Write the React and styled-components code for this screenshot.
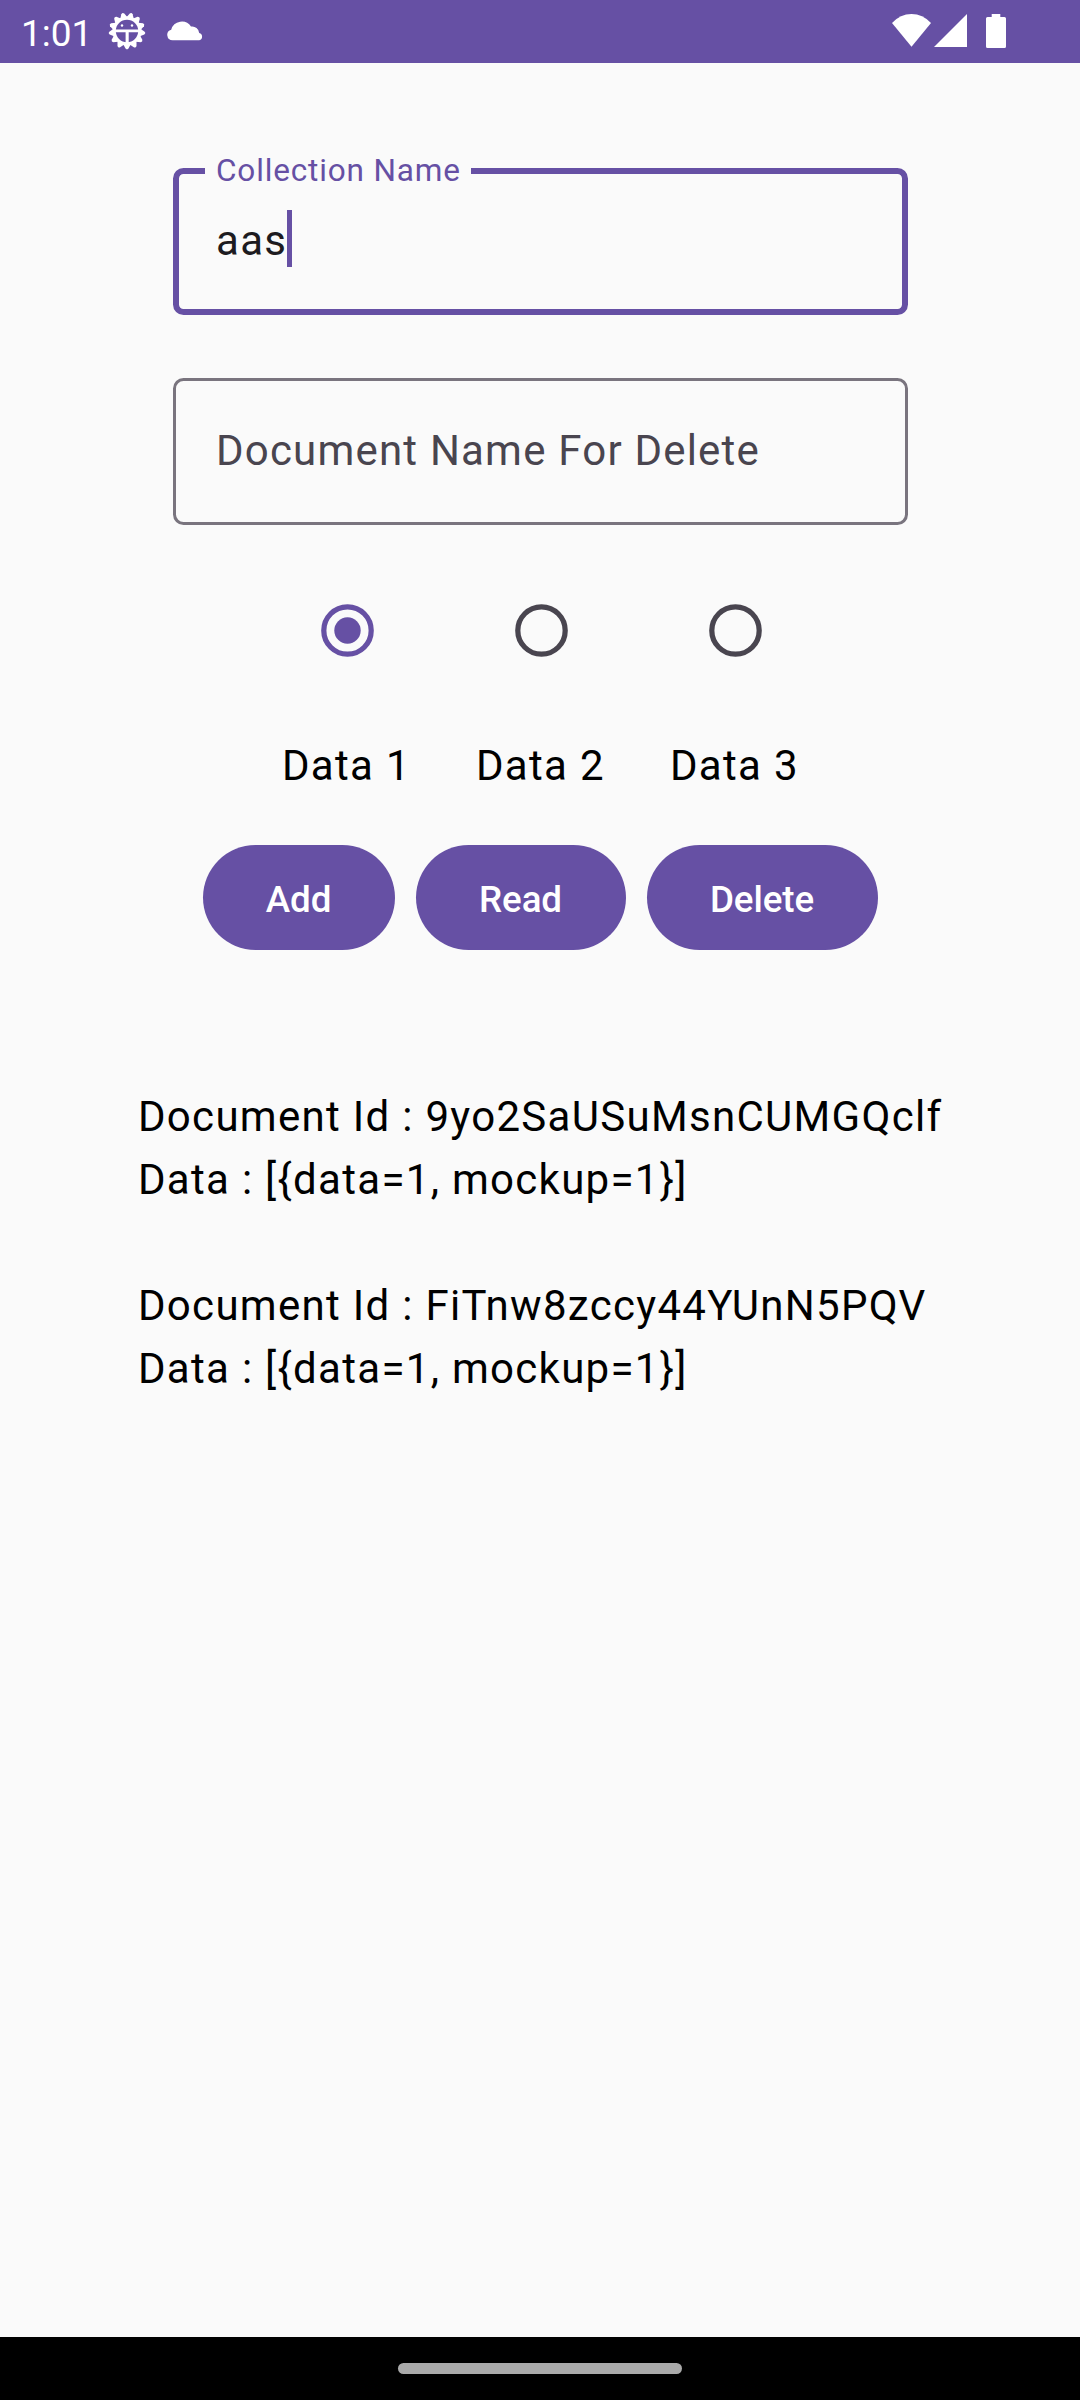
import React, { useState } from "react";
import styled, { createGlobalStyle, css } from "styled-components";

const purple = "#6650a4";
const surface = "#fafafa";
const onSurfaceVariant = "#49454f";

const GlobalStyle = createGlobalStyle`
  *, *::before, *::after { box-sizing: border-box; }
  body { margin: 0; background: ${surface}; }
`;

const bodyLarge = css`
  font-size: 42px;
  line-height: 63px;
  letter-spacing: 1.3px;
  font-weight: 400;
`;

const Screen = styled.div`
  display: flex;
  flex-direction: column;
  width: 1080px;
  height: 2400px;
  overflow: hidden;
  background: ${surface};
  color: #000;
  font-family: Roboto, "Noto Sans", sans-serif;
`;

const StatusBar = styled.header`
  display: flex;
  flex: none;
  align-items: flex-start;
  justify-content: space-between;
  height: 63px;
  padding: 0 74px 0 21px;
  background: ${purple};
  color: #fff;
`;

const StatusGroup = styled.div`
  display: flex;
  align-items: flex-start;
`;

const Clock = styled.span`
  width: 87px;
  padding-top: 12px;
  font-size: 37px;
  line-height: 43px;
`;

const StatusIcon = styled.svg`
  display: block;
  flex: none;
  margin-top: ${(p) => p.$top}px;
  margin-left: ${(p) => p.$gap || 0}px;
  fill: #fff;
`;

const Content = styled.main`
  display: flex;
  flex: 1;
  flex-direction: column;
  align-items: center;
  padding-top: 105px;
`;

const Fields = styled.div`
  display: flex;
  flex-direction: column;
  gap: 63px;
  width: 735px;
  margin-left: 1px;
`;

const Field = styled.label`
  position: relative;
  display: flex;
  align-items: center;
  height: 147px;
  padding: 0 ${(p) => (p.$focused ? 37 : 40)}px 2px;
  border: ${(p) => (p.$focused ? `6px solid ${purple}` : "3px solid #79747e")};
  border-radius: 10.5px;
`;

const FloatingLabel = styled.span`
  position: absolute;
  top: -24px;
  left: 26px;
  width: 266px;
  padding-left: 11px;
  background: ${surface};
  color: ${purple};
  font-size: 31.5px;
  line-height: 42px;
  letter-spacing: 0.85px;
  white-space: nowrap;
`;

const Value = styled.span`
  ${bodyLarge}
  color: #1d1b20;
`;

const Placeholder = styled.span`
  ${bodyLarge}
  letter-spacing: 1.2px;
  color: ${onSurfaceVariant};
`;

const Caret = styled.span`
  width: 5px;
  height: 57px;
  margin-top: -4px;
  background: ${purple};
`;

const Options = styled.div`
  display: flex;
  gap: 63px;
  margin: 42px 0 0 2px;
`;

const Option = styled.button`
  display: flex;
  flex-direction: column;
  align-items: center;
  gap: 41px;
  width: 131px;
  padding: 0;
  border: 0;
  background: none;
  color: #000;
  font-family: inherit;
`;

const OptionText = styled.span`
  ${bodyLarge}
  width: 131px;
  padding-left: 0.5px;
  text-align: left;
  white-space: nowrap;
`;

const RadioTarget = styled.span`
  display: flex;
  align-items: center;
  justify-content: center;
  width: 126px;
  height: 126px;
`;

const Actions = styled.div`
  display: flex;
  gap: 21px;
  margin-top: 48px;
`;

const Button = styled.button`
  height: 105px;
  padding: 5px 0 0;
  width: ${(p) => p.$width}px;
  border: 0;
  border-radius: 52.5px;
  background: ${purple};
  color: #fff;
  font-family: inherit;
  font-size: 36.75px;
  font-weight: 500;
  line-height: 52.5px;
  letter-spacing: -0.1px;
`;

const Results = styled.section`
  display: flex;
  flex-direction: column;
  gap: 63px;
  align-self: stretch;
  margin-top: 135px;
  padding-left: 138px;
`;

const Result = styled.article`
  ${bodyLarge}
  white-space: nowrap;
`;

const NavigationBar = styled.footer`
  display: flex;
  flex: none;
  align-items: center;
  justify-content: center;
  height: 63px;
  background: #000;
`;

const NavigationHandle = styled.span`
  width: 284px;
  height: 11px;
  border-radius: 6px;
  background: #aaa;
`;

const toothCount = 13;
const teeth = Array.from(
  { length: toothCount },
  (_, i) => 180 + (i * 360) / toothCount
);

function GearIcon() {
  return (
    <StatusIcon $top={12} width="38" height="38" viewBox="-19 -19 38 38">
      {teeth.map((angle) => (
        <path
          key={angle}
          d="M-3.600-13.500 L-1.500-17.600 Q0-19.200 1.500-17.600 L3.600-13.500Z"
          transform={`rotate(${angle})`}
        />
      ))}
      <circle r="12.8" fill="none" stroke="#fff" strokeWidth="3.2" />
      <circle cx="-5" cy="-5.5" r="1.2" />
      <circle cx="5" cy="-5.5" r="1.2" />
      <path d="M-12-1.500H12V1.200H1.700V13H-1.400V1.200H-12Z" />
    </StatusIcon>
  );
}

function CloudIcon() {
  return (
    <StatusIcon $top={20} $gap={21} width="36" height="21" viewBox="0 0 36 21">
      <path d="M5.6 20.3A5.4 5.4 0 0 1 4.2 9.7 11 11 0 0 1 24 6.6 7 7 0 0 1 32.2 13.1 3.7 3.7 0 0 1 32.300 20.300Z" />
    </StatusIcon>
  );
}

function Radio({ checked }) {
  const color = checked ? purple : onSurfaceVariant;
  return (
    <svg width="53" height="53" viewBox="0 0 53 53">
      <circle cx="26.5" cy="26.5" r="23.7" fill="none" stroke={color} strokeWidth="5.25" />
      {checked && <circle cx="26.5" cy="26.5" r="13.2" fill={color} />}
    </svg>
  );
}

const options = ["Data 1", "Data 2", "Data 3"];

const actions = [
  { label: "Add", width: 192 },
  { label: "Read", width: 210 },
  { label: "Delete", width: 231 },
];

const documents = [
  { id: "9yo2SaUSuMsnCUMGQclf", data: "[{data=1, mockup=1}]" },
  { id: "FiTnw8zccy44YUnN5PQV", data: "[{data=1, mockup=1}]" },
];

export default function App() {
  const [selected, setSelected] = useState(options[0]);

  return (
    <Screen>
      <GlobalStyle />
      <StatusBar>
        <StatusGroup>
          <Clock>1:01</Clock>
          <GearIcon />
          <CloudIcon />
        </StatusGroup>
        <StatusGroup>
          <StatusIcon $top={14} width="39" height="33" viewBox="0 0 39 33">
            <path d="M0 9Q8.300 0 19.500 0T39 9L19.500 32.700Z" />
          </StatusIcon>
          <StatusIcon $top={14} $gap={3} width="33" height="33" viewBox="0 0 33 33">
            <path d="M0 33L33 0V33Z" />
          </StatusIcon>
          <StatusIcon $top={14} $gap={19} width="20" height="34" viewBox="0 0 20 34">
            <path d="M5.700 0H14.300V3H18.500Q20 3 20 4.500V32.500Q20 34 18.500 34H1.500Q0 34 0 32.500V4.500Q0 3 1.500 3H5.700Z" />
          </StatusIcon>
        </StatusGroup>
      </StatusBar>

      <Content>
        <Fields>
          <Field $focused>
            <FloatingLabel>Collection Name</FloatingLabel>
            <Value>aas</Value>
            <Caret />
          </Field>
          <Field>
            <Placeholder>Document Name For Delete</Placeholder>
          </Field>
        </Fields>

        <Options>
          {options.map((name) => (
            <Option key={name} onClick={() => setSelected(name)}>
              <RadioTarget>
                <Radio checked={name === selected} />
              </RadioTarget>
              <OptionText>{name}</OptionText>
            </Option>
          ))}
        </Options>

        <Actions>
          {actions.map(({ label, width }) => (
            <Button key={label} $width={width}>
              {label}
            </Button>
          ))}
        </Actions>

        <Results>
          {documents.map(({ id, data }) => (
            <Result key={id}>
              <div>Document Id : {id}</div>
              <div>Data : {data}</div>
            </Result>
          ))}
        </Results>
      </Content>

      <NavigationBar>
        <NavigationHandle />
      </NavigationBar>
    </Screen>
  );
}
